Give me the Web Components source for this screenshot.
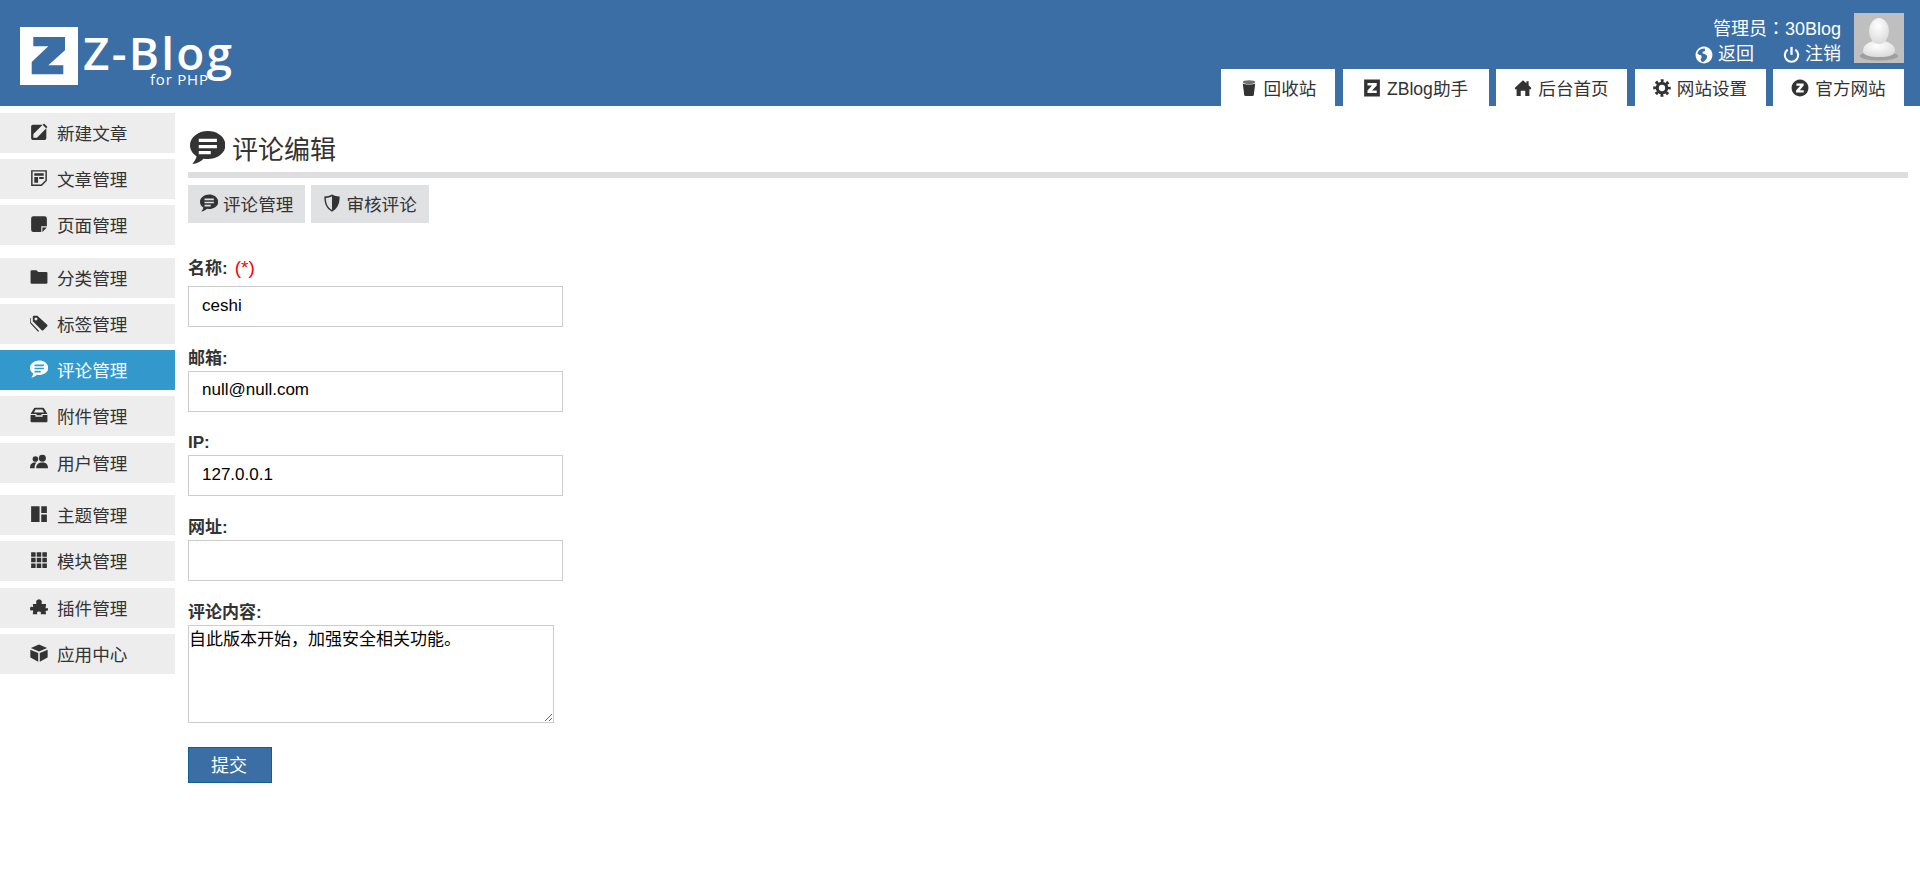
<!DOCTYPE html>
<html lang="zh-CN">
<head>
<meta charset="utf-8">
<title>评论编辑</title>
<style>
  html, body { margin: 0; padding: 0; background: #fff; }
  body { font-family: "Liberation Sans", "Noto Sans CJK SC", sans-serif; color: #333; font-size: 18px; }
  .page { display: flex; align-items: flex-start; }
</style>
</head>
<body>
<zb-header>
  <zb-tab slot="tabs" icon="trash" width="114">回收站</zb-tab>
  <zb-tab slot="tabs" icon="zsquare" width="146">ZBlog助手</zb-tab>
  <zb-tab slot="tabs" icon="home" width="131">后台首页</zb-tab>
  <zb-tab slot="tabs" icon="cog" width="131">网站设置</zb-tab>
  <zb-tab slot="tabs" icon="zcircle" width="131">官方网站</zb-tab>
</zb-header>
<div class="page">
  <zb-sidebar>
    <zb-side-item icon="edit">新建文章</zb-side-item>
    <zb-side-item icon="article">文章管理</zb-side-item>
    <zb-side-item icon="page" gap="13">页面管理</zb-side-item>
    <zb-side-item icon="folder">分类管理</zb-side-item>
    <zb-side-item icon="tags">标签管理</zb-side-item>
    <zb-side-item icon="comment" active>评论管理</zb-side-item>
    <zb-side-item icon="box" gap="7">附件管理</zb-side-item>
    <zb-side-item icon="users" gap="12">用户管理</zb-side-item>
    <zb-side-item icon="layout">主题管理</zb-side-item>
    <zb-side-item icon="grid" gap="7">模块管理</zb-side-item>
    <zb-side-item icon="puzzle">插件管理</zb-side-item>
    <zb-side-item icon="cube">应用中心</zb-side-item>
  </zb-sidebar>
  <zb-main heading="评论编辑">
    <zb-subtab slot="tabs" icon="comment">评论管理</zb-subtab>
    <zb-subtab slot="tabs" icon="shield">审核评论</zb-subtab>
    <zb-field label="名称:" required value="ceshi"></zb-field>
    <zb-field label="邮箱:" value="null@null.com"></zb-field>
    <zb-field label="IP:" value="127.0.0.1"></zb-field>
    <zb-field label="网址:" value=""></zb-field>
    <zb-area label="评论内容:" value="自此版本开始，加强安全相关功能。"></zb-area>
    <zb-submit>提交</zb-submit>
  </zb-main>
</div>

<script>
const ICONS = {
  edit: '<path d="M2.500 1.500h8.800L3 9.800V13h3.200l8.300-8.300v8.800a1.500 1.500 0 0 1-1.500 1.500H2.500A1.500 1.500 0 0 1 1 13.500V3a1.500 1.500 0 0 1 1.500-1.500z"/><path d="M12.500.5L15.500 3.500 14.300 4.700 11.300 1.700z"/>',
  article: '<path fill-rule="evenodd" d="M1 1h14v9.500L10.500 15H1zM2.300 2.300v11.400h7.600l3.800-3.800V2.300z"/><path d="M3.800 3.800h8.400v2.200H3.800zM3.800 7h3.400v5.200H3.800zM8.200 7.200h4v1.600h-4z"/>',
  page: '<path d="M3 1h10a2 2 0 0 1 2 2v7h-5v5H3a2 2 0 0 1-2-2V3a2 2 0 0 1 2-2z"/><path d="M11 11.200h4l-4 3.800z"/>',
  folder: '<path d="M.5 3a1 1 0 0 1 1-1h4.300L7.300 3.500h7.200a1 1 0 0 1 1 1V13a1 1 0 0 1-1 1h-13a1 1 0 0 1-1-1z"/>',
  tags: '<path fill-rule="evenodd" d="M6.500 1.500l8.800 8a1 1 0 0 1 0 1.400l-3.500 3.500a1 1 0 0 1-1.400 0L2.500 6.500v-4a1 1 0 0 1 1-1zM5.300 3.200a1.300 1.300 0 1 0 .01 0z"/><path d="M.7 3.500v3.800l7.400 7.800-.9.700-6.800-7.300a1 1 0 0 1-.3-.8V3.500z"/>',
  comment: '<path fill-rule="evenodd" d="M8.200.5C3.700.5 0 3.400 0 7c0 2.100 1.200 3.900 3 5-.2 1.100-.8 2.200-1.900 3.500 2-.2 3.900-1.100 5.100-2.400.6.1 1.300.2 2 .2 4.500 0 8-2.900 8-6.300C16.200 3.400 12.700.5 8.200.5zM4 4h8.300v1.500H4zM4 6.800h8.300v1.500H4zM4 9.600h5.500v1.500H4z"/>',
  box: '<path fill-rule="evenodd" d="M4.500 1.500h7a1 1 0 0 1 .9.600L15.500 7h-5.300v1.300H5.800V7H.5l3.100-4.900a1 1 0 0 1 .9-.6zM5 3L3.500 5.800h9L11 3z"/><path d="M.5 8h4.300v1.500h6.400V8h4.300v5.500a1 1 0 0 1-1 1h-13a1 1 0 0 1-1-1z"/>',
  users: '<circle cx="4.800" cy="5.300" r="2.500"/><circle cx="11" cy="4.600" r="3.100"/><path d="M0 13.500c0-3 1.500-5 3.800-5h2C4.600 9.800 4 11.500 4.100 13.500zM5.500 13.500c0-3.200 2-5 5.500-5s5 1.800 5 5z"/>',
  layout: '<path d="M1 1h7.500v14H1zM10 1h5v6h-5zM10 8.500h5V15h-5z"/>',
  grid: '<path d="M1 1h4v4H1zM6 1h4v4H6zM11 1h4v4h-4zM1 6h4v4H1zM6 6h4v4H6zM11 6h4v4h-4zM1 11h4v4H1zM6 11h4v4H6zM11 11h4v4h-4z"/>',
  puzzle: '<path d="M5.600 4.500C5 3 6 1 8 1s3 2 2.400 3.500c-.2.500 0 .9.500.9h3.400l-.4 3.300c0 .5.400.7.800.4.8-.5 1.300.1 1.300 1s-.5 1.700-1.300 1.300c-.5-.2-.9 0-.8.5l.4 2.600H10c-.5 0-.6-.4-.4-.8.4-.9 0-1.700-1.600-1.700s-2 .8-1.600 1.700c.2.400.1.800-.4.800H2.500l.3-3c0-.5-.3-.7-.7-.5C1 11.500 0 11 0 9.500s1-2 2.100-1.500c.4.200.7 0 .7-.5l-.3-2.100h2.600c.5 0 .7-.4.500-.9z"/>',
  cube: '<path d="M8 .5l7.200 3L8 6.600.8 3.500zM.3 5l7 3v7.700L.8 12.300A1 1 0 0 1 .3 11.500zM15.700 5l-7 3v7.700l6.500-3.400a1 1 0 0 0 .5-.8z"/>',
  trash: '<ellipse cx="8" cy="2.800" rx="5.500" ry="1.700" opacity=".7"/><path d="M2.500 4.200c1.500.9 9.500.9 11 0L12.200 14.600c-.1.800-8.300.8-8.400 0z"/>',
  zsquare: '<path fill-rule="evenodd" d="M1 .5h14v15H1zM4 3.500v2.300h4L4 10.300v2.200h8.200v-2.300H8l4.200-4.500V3.500z"/>',
  home: '<path d="M8 1l3 2.800V2h2v3.600l2.200 2.100V9h-1.500v6H10v-4.500H6V15H2.300V9H.8V7.700z"/>',
  cog: '<circle cx="8" cy="8" r="4.200" fill="none" stroke="currentColor" stroke-width="2.800"/><circle cx="8" cy="8" r="6.500" fill="none" stroke="currentColor" stroke-width="2.600" stroke-dasharray="2.550 2.550" stroke-dashoffset="1.270"/>',
  zcircle: '<path fill-rule="evenodd" d="M8 .5a7.500 7.500 0 1 1-.01 0zM4.800 4v2h3.400L4.500 10.200V12h6.800v-2H7.800l3.500-4.200V4z"/>',
  globe: '<path fill-rule="evenodd" d="M8 .5a7.500 7.500 0 1 1-.01 0zM6 2.400C4 3 2.500 4.600 2.100 6.700L4 8l1.500.3.5 2-1 1 .5 2.200 1.500.8c1 0 2.500-2 3.500-3.500l.4-2.200L8.500 7 6.500 6.500l.5-1.500 2-.5L8.700 2.300z"/>',
  power: '<path d="M8 .8v7.500" fill="none" stroke="currentColor" stroke-width="2.200"/><path d="M4.400 3.400a6.300 6.300 0 1 0 7.200 0" fill="none" stroke="currentColor" stroke-width="2"/>',
  shield: '<path fill-rule="evenodd" d="M8 .5c2 1.200 4 1.700 6.800 1.800 0 6.200-1.600 10.800-6.800 13.400C2.800 13.100 1.200 8.500 1.200 2.300 4 2.200 6 1.700 8 .5zM8 2C6.300 3 4.500 3.400 2.500 3.500c.1 4.700 1.500 8.300 5.500 10.700z"/>'
};

// every icon is an inline svg picked from the table above
class ZbIcon extends HTMLElement {
  connectedCallback() {
    const size = this.getAttribute("size") || 16;
    this.attachShadow({ mode: "open" }).innerHTML = `
    <style>
      :host { display: inline-flex; width: ${size}px; height: ${size}px; flex: none; }
      svg { width: 100%; height: 100%; fill: currentColor; display: block; }
    </style>
    <svg viewBox="0 0 16 16">${ICONS[this.getAttribute("name")] || ""}</svg>`;
  }
}

class ZbHeader extends HTMLElement {
  connectedCallback() {
    this.attachShadow({ mode: "open" }).innerHTML = `
    <style>
      :host { display: flex; height: 106px; background: #3a6ea5; color: #fff; justify-content: space-between; }
      .logo { display: flex; align-items: flex-start; margin: 27px 0 0 20px; position: relative; }
      .logo svg { width: 58px; height: 58px; display: block; }
      .name { font: 600 46px/40px "Open Sans", sans-serif; margin: 5px 0 0 5px; letter-spacing: 2.200px; white-space: nowrap; }
      .for { position: absolute; left: 130px; top: 47px; font: 15px/10px "Open Sans", sans-serif; letter-spacing: .8px; white-space: nowrap; }
      .right { display: flex; flex-direction: column; align-items: flex-end; padding-right: 16px; }
      .user { display: flex; margin-top: 13px; gap: 13px; height: 50px; }
      .info { text-align: right; font-size: 18px; line-height: 25px; white-space: nowrap; padding-top: 2px; }
      .colon { font-family: "Noto Sans CJK TC", sans-serif; }
      .links { display: flex; justify-content: flex-end; gap: 29px; }
      .links span { display: inline-flex; align-items: center; gap: 5px; }
      .avatar { width: 50px; height: 50px; display: block; }
      .tabs { display: flex; gap: 7.500px; margin-top: 6px; }
    </style>
    <div class="logo">
      <svg viewBox="0 0 58 58"><path fill="#fff" fill-rule="evenodd" d="M0 0h58v58H0zM13.300 10H45v13.300L28.300 38.300h15v9H11.700V35l16.600-15.700h-15z"/></svg>
      <div class="name">Z-Blog</div>
      <div class="for">for PHP</div>
    </div>
    <div class="right">
      <div class="user">
        <div class="info">
          <div>管理员<span class="colon" lang="zh-TW">：</span>30Blog</div>
          <div class="links">
            <span><zb-icon name="globe" size="18"></zb-icon>返回</span>
            <span><zb-icon name="power" size="17"></zb-icon>注销</span>
          </div>
        </div>
        <svg class="avatar" viewBox="0 0 50 50">
          <defs>
            <radialGradient id="av" cx=".45" cy=".3" r=".8"><stop offset="0" stop-color="#fff"/><stop offset="1" stop-color="#d6d6d6"/></radialGradient>
          </defs>
          <rect width="50" height="50" fill="#bfbfbf"/>
          <ellipse cx="25" cy="43" rx="19" ry="4.500" fill="#9f9f9f"/>
          <path d="M9 38c0-6 5-8 10-10h12c5 2 10 4 10 10 0 4-6 6-16 6S9 42 9 38z" fill="url(#av)"/>
          <ellipse cx="25" cy="18" rx="10" ry="13" fill="url(#av)"/>
        </svg>
      </div>
      <div class="tabs"><slot name="tabs"></slot></div>
    </div>`;
  }
}

class ZbTab extends HTMLElement {
  connectedCallback() {
    this.attachShadow({ mode: "open" }).innerHTML = `
    <style>
      :host { display: flex; align-items: center; justify-content: center; height: 37px; width: ${this.getAttribute("width")}px; background: #fff; color: #333; font-size: 17.600px; gap: 6px; white-space: nowrap; }
    </style>
    <zb-icon name="${this.getAttribute("icon")}" size="18"></zb-icon><slot></slot>`;
  }
}

class ZbSidebar extends HTMLElement {
  connectedCallback() {
    this.attachShadow({ mode: "open" }).innerHTML = `
    <style>
      :host { display: flex; flex-direction: column; width: 175px; flex: none; padding-top: 7px; }
    </style>
    <slot></slot>`;
  }
}

class ZbSideItem extends HTMLElement {
  connectedCallback() {
    const gap = this.getAttribute("gap") || 6;
    const active = this.hasAttribute("active");
    this.attachShadow({ mode: "open" }).innerHTML = `
    <style>
      :host { display: flex; align-items: center; box-sizing: border-box; height: 40px; padding: 0 0 2px 30px; margin-bottom: ${gap}px; gap: 9px;
        background: ${active ? "#3399cc" : "#ededed"}; color: ${active ? "#fff" : "#333"}; font-size: 17.600px; white-space: nowrap; }
    </style>
    <zb-icon name="${this.getAttribute("icon")}" size="18"></zb-icon><slot></slot>`;
  }
}

class ZbMain extends HTMLElement {
  connectedCallback() {
    this.attachShadow({ mode: "open" }).innerHTML = `
    <style>
      :host { display: block; flex: 1; padding: 0 12px 0 13px; min-width: 0; }
      .head { display: flex; align-items: center; height: 72px; padding: 16px 0 0 2px; box-sizing: border-box; border-bottom: 6px solid #dedede; gap: 7px; font-size: 26px; white-space: nowrap; }
      .head h1 { font: inherit; margin: 0; }
      .tabs { display: flex; gap: 6px; margin: 7px 0 33px; }
    </style>
    <div class="head"><zb-icon name="comment" size="35"></zb-icon><h1>${this.getAttribute("heading")}</h1></div>
    <div class="tabs"><slot name="tabs"></slot></div>
    <slot></slot>`;
  }
}

class ZbSubtab extends HTMLElement {
  connectedCallback() {
    this.attachShadow({ mode: "open" }).innerHTML = `
    <style>
      :host { display: flex; align-items: center; box-sizing: border-box; height: 38px; padding: 0 12px 2px; gap: 5px; background: #e0e1e3; font-size: 17.600px; white-space: nowrap; }
    </style>
    <zb-icon name="${this.getAttribute("icon")}" size="18"></zb-icon><slot></slot>`;
  }
}

class ZbField extends HTMLElement {
  connectedCallback() {
    const required = this.hasAttribute("required");
    const req = required ? '<span class="req">(*)</span>' : "";
    this.attachShadow({ mode: "open" }).innerHTML = `
    <style>
      :host { display: block; margin-bottom: 19.670px; }
      label { display: block; height: ${required ? 30 : 24}px; line-height: 24px; font-size: 17px; font-weight: bold; white-space: nowrap; }
      .req { color: #f00; font-weight: normal; font-size: 19px; margin-left: 7px; }
      input { display: block; box-sizing: border-box; width: 375px; height: 41px; padding: 0 13px 2px; border: 1px solid #ccc; outline: 0; font: 17px "Liberation Sans", "Noto Sans CJK SC", sans-serif; color: #000; background: #fff; }
    </style>
    <label>${this.getAttribute("label")}${req}</label>
    <input type="text" value="${this.getAttribute("value")}">`;
  }
}

class ZbArea extends HTMLElement {
  connectedCallback() {
    this.attachShadow({ mode: "open" }).innerHTML = `
    <style>
      :host { display: block; margin-bottom: 24px; }
      label { display: block; height: 24px; line-height: 24px; font-size: 17px; font-weight: bold; white-space: nowrap; }
      textarea { display: block; box-sizing: border-box; width: 366px; height: 98px; margin: 0; padding: 3px 0 0; border: 1px solid #ccc; outline: 0; font: 17px/22px "Liberation Sans", "Noto Sans CJK SC", sans-serif; color: #000; background: #fff; }
    </style>
    <label>${this.getAttribute("label")}</label>
    <textarea>${this.getAttribute("value")}</textarea>`;
  }
}

class ZbSubmit extends HTMLElement {
  connectedCallback() {
    this.attachShadow({ mode: "open" }).innerHTML = `
    <style>
      :host { display: block; }
      button { display: block; box-sizing: border-box; width: 84px; height: 36px; padding: 0 2px 2px 0; border: 1px solid #0f5f8f; background: #3a6ea5; color: #fff; font: 18px "Liberation Sans", "Noto Sans CJK SC", sans-serif; }
    </style>
    <button type="button"><slot></slot></button>`;
  }
}

customElements.define("zb-icon", ZbIcon);
customElements.define("zb-header", ZbHeader);
customElements.define("zb-tab", ZbTab);
customElements.define("zb-sidebar", ZbSidebar);
customElements.define("zb-side-item", ZbSideItem);
customElements.define("zb-main", ZbMain);
customElements.define("zb-subtab", ZbSubtab);
customElements.define("zb-field", ZbField);
customElements.define("zb-area", ZbArea);
customElements.define("zb-submit", ZbSubmit);
</script>
</body>
</html>
